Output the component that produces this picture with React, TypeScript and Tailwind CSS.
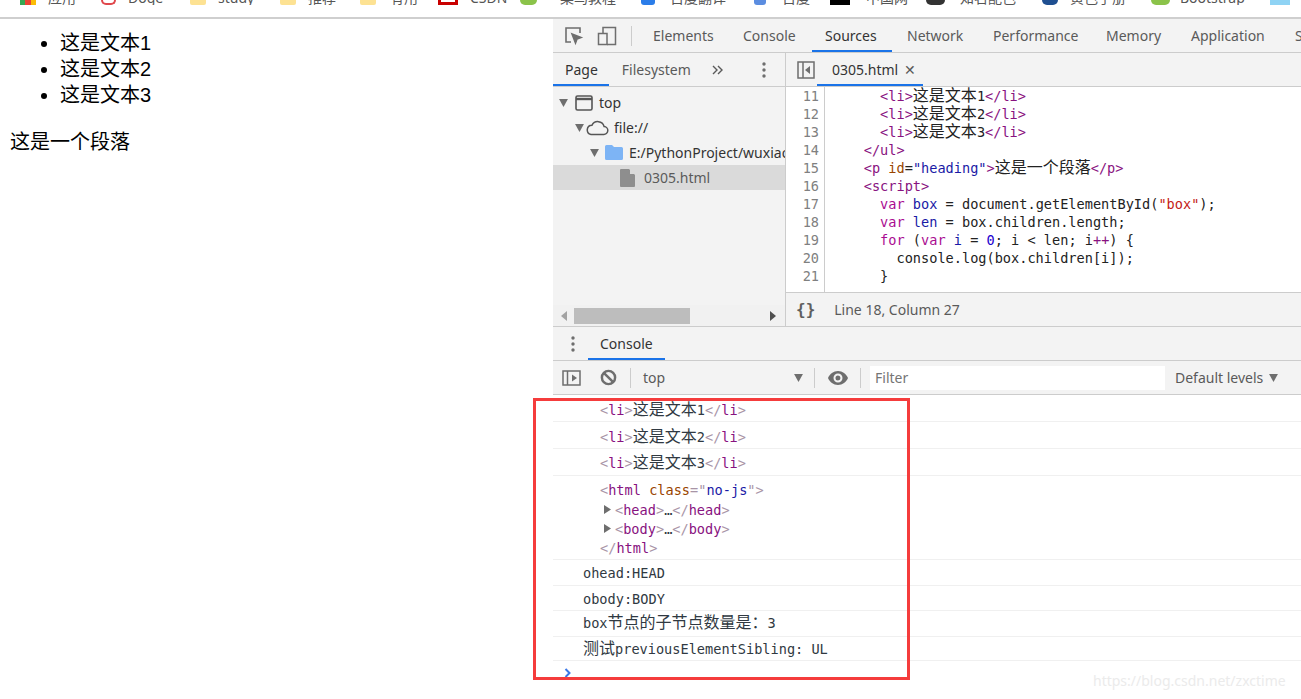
import type { ReactNode } from "react";

const ui = "font-['Noto_Sans','Noto_Sans_CJK_SC',sans-serif]";
const mono = "font-['DejaVu_Sans_Mono','Noto_Sans_CJK_SC',monospace]";

function Zh({ children }: { children: ReactNode }) {
  return <span className="text-[16px] leading-[0] font-['Noto_Sans_CJK_SC',sans-serif]">{children}</span>;
}

function Dots({ className }: { className: string }) {
  return (
    <svg viewBox="0 0 4 16" className={className} fill="#6e6e6e">
      <circle cx="2" cy="2" r="1.7" />
      <circle cx="2" cy="8" r="1.7" />
      <circle cx="2" cy="14" r="1.7" />
    </svg>
  );
}

function Down({ className }: { className: string }) {
  return (
    <svg viewBox="0 0 10 9" className={`shrink-0 ${className}`} fill="#6e6e6e">
      <path d="M0 0h10L5 9z" />
    </svg>
  );
}

function Bookmarks() {
  const items = [
    { w: "w-[101px]", label: "应用", icon: <div className="ml-[20px] mr-[12px] h-[5px] w-[16px] bg-[linear-gradient(90deg,#34a853_33%,#ea4335_33%,#ea4335_66%,#fbbc05_66%)]" /> },
    { w: "w-[89px]", label: "Doge", icon: <div className="mr-[12px] h-[5px] w-[15px] rounded-b-full border-b-2 border-x-2 border-[#e0484d] bg-white" /> },
    { w: "w-[90px]", label: "study", icon: <div className="mr-[12px] h-[5px] w-[16px] rounded-b-[2px] bg-[#fde293]" /> },
    { w: "w-[80px]", label: "推荐", icon: <div className="mr-[12px] h-[5px] w-[16px] rounded-b-[2px] bg-[#fde293]" /> },
    { w: "w-[78px]", label: "有用", icon: <div className="mr-[14px] h-[5px] w-[16px] rounded-b-[2px] bg-[#fde293]" /> },
    { w: "w-[82px]", label: "CSDN", icon: <div className="mr-[12px] h-[5px] w-[20px] border-x-[3px] border-b-[3px] border-[#c90000] bg-white" /> },
    { w: "w-[121px]", label: "菜鸟教程", icon: <div className="mr-[23px] h-[5px] w-[17px] rounded-b-full bg-[#8bc34a]" /> },
    { w: "w-[113px]", label: "百度翻译", icon: <div className="mr-[15px] h-[5px] w-[14px] rounded-b-[3px] bg-[#2b7de9]" /> },
    { w: "w-[76px]", label: "百度", icon: <div className="mr-[16px] h-[5px] w-[12px] rounded-b-[3px] bg-[#5b8de0]" /> },
    { w: "w-[96px]", label: "中国网", icon: <div className="mr-[16px] h-[5px] w-[20px] bg-black" /> },
    { w: "w-[116px]", label: "知名配色", icon: <div className="mr-[15px] h-[5px] w-[19px] rounded-b-full bg-[#333333]" /> },
    { w: "w-[109px]", label: "黄色手册", icon: <div className="mr-[12px] h-[5px] w-[16px] rounded-b-full bg-[#1f4f91]" /> },
    { w: "w-[119px]", label: "Bootstrap", icon: <div className="mr-[10px] h-[5px] w-[19px] rounded-b-full bg-[#8bc34a]" /> },
    { w: "w-[31px]", label: "", icon: <div className="h-[5px] w-[20px] bg-[#8fd3f4]" /> },
  ];
  return (
    <div className={`h-[19px] shrink-0 border-b-2 border-[#cfcfcf] bg-white ${ui}`}>
      <div className="flex h-[5px] items-end overflow-hidden">
        {items.map((item) => (
          <div key={item.label} className={`flex shrink-0 items-end ${item.w}`}>
            {item.icon}
            <span className="translate-y-[1px] text-[14px] leading-[16px] text-[#555555]">{item.label}</span>
          </div>
        ))}
      </div>
    </div>
  );
}

function Page() {
  return (
    <div className="w-[553px] shrink-0 bg-white pl-[10px] pt-[11px] font-['Liberation_Sans','Noto_Sans_CJK_SC',sans-serif] text-[20px] leading-[26px] text-black">
      <ul className="list-disc pl-[50px]">
        <li>这是文本1</li>
        <li>这是文本2</li>
        <li>这是文本3</li>
      </ul>
      <p className="mt-[21px]">这是一个段落</p>
    </div>
  );
}

function MainTabs() {
  const tabs = [
    { label: "Elements", cls: "w-[90px]" },
    { label: "Console", cls: "w-[82px]" },
    { label: "Sources", cls: "w-[82px] text-[#333333]" },
    { label: "Network", cls: "w-[86px]" },
    { label: "Performance", cls: "w-[113px]" },
    { label: "Memory", cls: "w-[85px]" },
    { label: "Application", cls: "w-[104px]" },
    { label: "Security", cls: "w-[60px]" },
  ];
  return (
    <div className="relative flex h-[34px] shrink-0 items-center overflow-hidden border-b border-[#cccccc]">
      <svg viewBox="0 0 20 20" className="ml-[11px] h-[20px] w-[20px] shrink-0" fill="none" stroke="#6e6e6e" strokeWidth="1.6">
        <path d="M7 16H2V2h14v5" />
        <path d="M8 8l9 3.500-4 1.500-1.500 4z" fill="#6e6e6e" />
      </svg>
      <svg viewBox="0 0 20 20" className="ml-[13px] h-[20px] w-[20px] shrink-0" fill="none" stroke="#6e6e6e" strokeWidth="1.500">
        <path d="M6 7V1.500h12.500v17H10" />
        <rect x="1.500" y="7.500" width="8.500" height="11" />
      </svg>
      <div className="ml-[14px] mr-[21px] h-[20px] w-px shrink-0 bg-[#cccccc]" />
      {tabs.map((t) => (
        <div key={t.label} className={`shrink-0 text-[#5a5a5a] ${t.cls}`}>
          {t.label}
        </div>
      ))}
      <div className="absolute bottom-0 left-[259px] h-[2px] w-[80px] bg-[#1a73e8]" />
    </div>
  );
}

function Navigator() {
  return (
    <div className="flex w-[233px] shrink-0 flex-col border-r border-[#cccccc]">
      <div className="relative flex h-[34px] shrink-0 items-center border-b border-[#cccccc]">
        <span className="ml-[12px] text-[#333333]">Page</span>
        <span className="ml-[24px] text-[#5a5a5a]">Filesystem</span>
        <svg viewBox="0 0 11 10" className="ml-[21px] h-[10px] w-[11px] shrink-0" fill="none" stroke="#5a5a5a" strokeWidth="1.4">
          <path d="M1 1l4 4-4 4M6 1l4 4-4 4" />
        </svg>
        <Dots className="ml-[39px] h-[16px] w-[4px] shrink-0" />
        <div className="absolute bottom-0 left-0 h-[2px] w-[56px] bg-[#1a73e8]" />
      </div>
      <div className="flex-1 overflow-hidden pt-[3px] text-[#333333]">
        <div className="flex h-[25px] items-center whitespace-nowrap">
          <Down className="ml-[6px] h-[8px] w-[9px]" />
          <svg viewBox="0 0 18 16" className="ml-[7px] h-[16px] w-[18px] shrink-0" fill="none" stroke="#555555" strokeWidth="1.6">
            <rect x="1" y="1" width="16" height="14" rx="1.500" />
            <path d="M1 4h16" strokeWidth="2.400" />
          </svg>
          <span className="ml-[6px]">top</span>
        </div>
        <div className="flex h-[25px] items-center whitespace-nowrap">
          <Down className="ml-[22px] h-[8px] w-[9px]" />
          <svg viewBox="0 0 24 16" className="ml-[1px] h-[16px] w-[24px] shrink-0" fill="none" stroke="#555555" strokeWidth="1.500">
            <path d="M6 14.500h12.500a4 4 0 0 0 .6-8A6.500 6.500 0 0 0 7 5.200a4.700 4.700 0 0 0-1 9.300z" />
          </svg>
          <span className="ml-[5px]">file://</span>
        </div>
        <div className="flex h-[25px] items-center overflow-hidden whitespace-nowrap">
          <Down className="ml-[37px] h-[8px] w-[9px]" />
          <svg viewBox="0 0 18 15" className="ml-[6px] h-[15px] w-[18px] shrink-0" fill="#7db4f5">
            <path d="M0 1.500A1.500 1.500 0 0 1 1.500 0H7l2 2h7.500A1.500 1.500 0 0 1 18 3.500v10a1.500 1.500 0 0 1-1.500 1.500h-15A1.500 1.500 0 0 1 0 13.500z" />
          </svg>
          <span className="ml-[6px]">E:/PythonProject/wuxiao</span>
        </div>
        <div className="flex h-[25px] items-center whitespace-nowrap bg-[#dadada] text-[#5a5a5a]">
          <svg viewBox="0 0 15 18" className="ml-[67px] h-[18px] w-[15px] shrink-0" fill="#8e8e8e">
            <path d="M1 0h8l6 6v11a1 1 0 0 1-1 1H1a1 1 0 0 1-1-1V1a1 1 0 0 1 1-1z" />
            <path d="M10 0v5h5z" fill="#dadada" />
          </svg>
          <span className="ml-[9px]">0305.html</span>
        </div>
      </div>
      <div className="flex h-[21px] shrink-0 items-center bg-[#f1f1f1]">
        <svg viewBox="0 0 6 10" className="ml-[8px] h-[10px] w-[6px]" fill="#a3a3a3">
          <path d="M6 0v10L0 5z" />
        </svg>
        <div className="ml-[7px] h-[16px] w-[116px] bg-[#bdbdbd]" />
        <svg viewBox="0 0 6 10" className="ml-[80px] h-[10px] w-[6px]" fill="#505050">
          <path d="M0 0v10l6-5z" />
        </svg>
      </div>
    </div>
  );
}

const tag = "text-[#881280]";
const kw = "text-[#aa0d91]";
const def = "text-[#1a1aa6]";

const codeLines: { n: number; code: ReactNode }[] = [
  { n: 11, code: <>      <span className={tag}>&lt;li&gt;</span><Zh>这是文本</Zh>1<span className={tag}>&lt;/li&gt;</span></> },
  { n: 12, code: <>      <span className={tag}>&lt;li&gt;</span><Zh>这是文本</Zh>2<span className={tag}>&lt;/li&gt;</span></> },
  { n: 13, code: <>      <span className={tag}>&lt;li&gt;</span><Zh>这是文本</Zh>3<span className={tag}>&lt;/li&gt;</span></> },
  { n: 14, code: <>    <span className={tag}>&lt;/ul&gt;</span></> },
  { n: 15, code: <>    <span className={tag}>&lt;p </span><span className="text-[#994500]">id</span>=<span className={def}>"heading"</span><span className={tag}>&gt;</span><Zh>这是一个段落</Zh><span className={tag}>&lt;/p&gt;</span></> },
  { n: 16, code: <>    <span className={tag}>&lt;script&gt;</span></> },
  { n: 17, code: <>      <span className={kw}>var</span> <span className={def}>box</span> = document.getElementById(<span className="text-[#c41a16]">"box"</span>);</> },
  { n: 18, code: <>      <span className={kw}>var</span> <span className={def}>len</span> = box.children.length;</> },
  { n: 19, code: <>      <span className={kw}>for</span> (<span className={kw}>var</span> <span className={def}>i</span> = <span className="text-[#1c00cf]">0</span>; i &lt; len; i<span className={tag}>++</span>) {"{"}</> },
  { n: 20, code: <>        console.log(box.children[i]);</> },
  { n: 21, code: <>      {"}"}</> },
];

function Editor() {
  return (
    <div className="flex min-w-0 flex-1 flex-col">
      <div className="relative flex h-[34px] shrink-0 items-center border-b border-[#cccccc]">
        <svg viewBox="0 0 18 18" className="ml-[11px] h-[18px] w-[18px]" fill="none" stroke="#6e6e6e" strokeWidth="1.500">
          <rect x="1" y="1" width="16" height="16" />
          <path d="M6 1v16" />
          <path d="M13 5v8L8 9z" fill="#6e6e6e" stroke="none" />
        </svg>
        <span className="ml-[17px] text-[#333333]">0305.html</span>
        <span className="ml-[6px] text-[14px] leading-none text-[#5a5a5a]">✕</span>
        <div className="absolute bottom-0 left-[31px] h-[2px] w-[106px] bg-[#1a73e8]" />
      </div>
      <div className={`flex-1 overflow-hidden bg-white ${mono} text-[13.600px] leading-[18px]`}>
        <div className="flex h-full">
          <div className="w-[39px] shrink-0 border-r border-[#cccccc] pr-[5px] text-right text-[#808080]">
            {codeLines.map((l) => (
              <div key={l.n} className="h-[18px]">{l.n}</div>
            ))}
          </div>
          <div className="pl-[6px] text-[#222222]">
            {codeLines.map((l) => (
              <div key={l.n} className="h-[18px] overflow-hidden whitespace-pre">{l.code}</div>
            ))}
          </div>
        </div>
      </div>
      <div className="flex h-[34px] shrink-0 items-center border-t border-[#cccccc] text-[#5a5a5a]">
        <span className={`ml-[10px] text-[16px] font-bold leading-none text-[#5f5f5f] ${mono}`}>{"{}"}</span>
        <span className="ml-[19px]">Line 18, Column 27</span>
      </div>
    </div>
  );
}

function ConsoleTabs() {
  return (
    <div className="relative flex h-[35px] shrink-0 items-center border-b border-t border-[#cccccc]">
      <Dots className="ml-[18px] h-[16px] w-[4px]" />
      <span className="ml-[25px] text-[#333333]">Console</span>
      <div className="absolute bottom-0 left-[35px] h-[2px] w-[77px] bg-[#1a73e8]" />
    </div>
  );
}

function ConsoleToolbar() {
  return (
    <div className="flex h-[34px] shrink-0 items-center border-b border-[#cccccc] text-[#5a5a5a]">
      <svg viewBox="0 0 19 16" className="ml-[9px] h-[16px] w-[19px] shrink-0" fill="none" stroke="#6e6e6e" strokeWidth="1.500">
        <rect x="1" y="1" width="17" height="14" />
        <path d="M5.500 1v14" />
        <path d="M10 4.500v7l5-3.500z" fill="#6e6e6e" stroke="none" />
      </svg>
      <svg viewBox="0 0 18 18" className="ml-[19px] h-[17px] w-[17px] shrink-0" fill="none" stroke="#6e6e6e" strokeWidth="2.600">
        <circle cx="9" cy="9" r="7" />
        <path d="M4 4l10 10" />
      </svg>
      <div className="ml-[13px] h-[20px] w-px shrink-0 bg-[#cccccc]" />
      <span className="ml-[12px] w-[151px] shrink-0">top</span>
      <Down className="h-[8px] w-[9px]" />
      <div className="ml-[11px] h-[20px] w-px shrink-0 bg-[#cccccc]" />
      <svg viewBox="0 0 20 14" className="ml-[13px] h-[14px] w-[20px] shrink-0" fill="#6e6e6e">
        <path d="M10 0C5.500 0 1.700 2.900 0 7c1.700 4.100 5.500 7 10 7s8.300-2.900 10-7c-1.700-4.100-5.500-7-10-7zm0 11.500a4.500 4.500 0 1 1 0-9 4.500 4.500 0 0 1 0 9zm0-7a2.500 2.500 0 1 0 0 5 2.500 2.500 0 0 0 0-5z" />
      </svg>
      <div className="ml-[12px] h-[20px] w-px shrink-0 bg-[#cccccc]" />
      <div className="ml-[9px] flex h-[24px] w-[295px] shrink-0 items-center bg-white pl-[5px] text-[#757575]">Filter</div>
      <span className="ml-[10px] whitespace-nowrap">Default levels</span>
      <Down className="ml-[6px] h-[8px] w-[9px]" />
    </div>
  );
}

const bracket = "text-[#a894a6]";
const tagName = "text-[#881280]";

function Row({ className, children }: { className: string; children: ReactNode }) {
  return <div className={`shrink-0 whitespace-pre border-b border-[#f0f0f0] ${className}`}>{children}</div>;
}

function LiRow({ n, className }: { n: number; className: string }) {
  return (
    <Row className={`pl-[47px] ${className}`}>
      <span className={bracket}>&lt;</span><span className={tagName}>li</span><span className={bracket}>&gt;</span>
      <Zh>这是文本</Zh>{n}
      <span className={bracket}>&lt;/</span><span className={tagName}>li</span><span className={bracket}>&gt;</span>
    </Row>
  );
}

function Collapsed({ name }: { name: string }) {
  return (
    <div className="flex h-[19px] items-center">
      <svg viewBox="0 0 7 9" className="ml-[4px] mr-[4px] h-[9px] w-[7px]" fill="#6e6e6e">
        <path d="M0 0l7 4.500L0 9z" />
      </svg>
      <span className={bracket}>&lt;</span><span className={tagName}>{name}</span><span className={bracket}>&gt;</span>
      <span>…</span>
      <span className={bracket}>&lt;/</span><span className={tagName}>{name}</span><span className={bracket}>&gt;</span>
    </div>
  );
}

function ConsoleOutput() {
  return (
    <div className={`relative flex-1 overflow-hidden bg-white ${mono} text-[13.600px] leading-[18px] text-[#303942]`}>
      <LiRow n={1} className="h-[27px] pt-[6px]" />
      <LiRow n={2} className="h-[27px] pt-[6px]" />
      <LiRow n={3} className="h-[27px] pt-[5px]" />
      <Row className="h-[84px] pl-[47px] pt-[5px]">
        <div className="h-[19px]">
          <span className={bracket}>&lt;</span><span className={tagName}>html</span>{" "}
          <span className="text-[#994500]">class</span><span className={bracket}>="</span>
          <span className={def}>no-js</span><span className={bracket}>"&gt;</span>
        </div>
        <Collapsed name="head" />
        <Collapsed name="body" />
        <div className="flex h-[19px] items-center">
          <span className={bracket}>&lt;/</span><span className={tagName}>html</span><span className={bracket}>&gt;</span>
        </div>
      </Row>
      <Row className="h-[26px] pl-[30px] pt-[4px]">ohead:HEAD</Row>
      <Row className="h-[25px] pl-[30px] pt-[4px]">obody:BODY</Row>
      <Row className="h-[26px] pl-[30px] pt-[3px]">box<Zh>节点的子节点数量是：</Zh>3</Row>
      <Row className="h-[24px] pl-[30px] pt-[3px]"><Zh>测试</Zh>previousElementSibling: UL</Row>
      <svg viewBox="0 0 8 10" className="ml-[11px] mt-[7px] h-[10px] w-[8px]" fill="none" stroke="#3b78e7" strokeWidth="2">
        <path d="M1.500 1l4 4-4 4" />
      </svg>
    </div>
  );
}

export default function App() {
  return (
    <div className="relative flex h-[699px] w-[1301px] flex-col overflow-hidden bg-white">
      <Bookmarks />
      <div className="flex min-h-0 flex-1">
        <Page />
        <div className={`flex min-w-0 flex-1 flex-col bg-[#f3f3f3] text-[14px] leading-[18px] ${ui}`}>
          <MainTabs />
          <div className="flex h-[273px] shrink-0">
            <Navigator />
            <Editor />
          </div>
          <ConsoleTabs />
          <ConsoleToolbar />
          <ConsoleOutput />
        </div>
      </div>
      <div className="pointer-events-none absolute left-[533px] top-[398px] h-[282px] w-[377px] border-[3px] border-[#f53c3c]" />
      <div className={`pointer-events-none absolute left-[1093px] top-[671px] text-[14px] leading-[20px] text-[#ebebeb] ${ui}`}>
        https://blog.csdn.net/zxctime
      </div>
    </div>
  );
}
